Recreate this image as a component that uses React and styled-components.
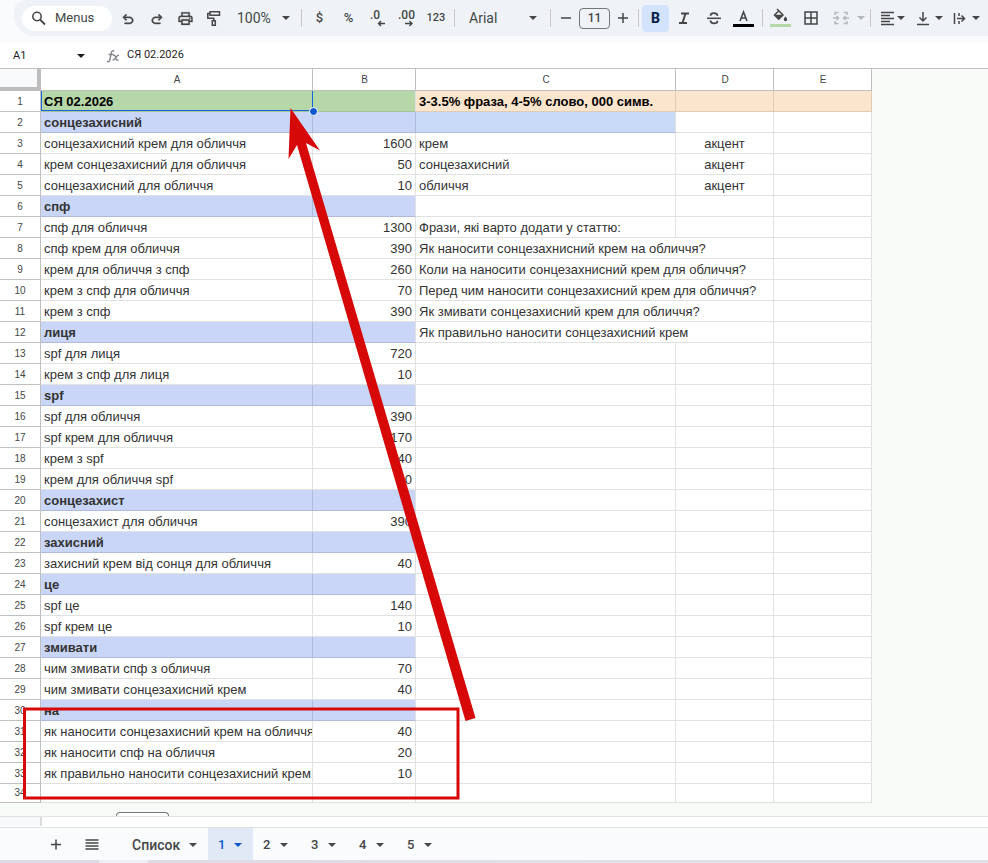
import React from "react";
import styled, { createGlobalStyle, css } from "styled-components";

const GlobalStyle = createGlobalStyle`
  *, *::before, *::after { box-sizing: border-box; }
  body {
    margin: 0;
    background: #f9fbfd;
    color: #1f1f1f;
    font-family: "Liberation Sans", Arial, sans-serif;
  }
  button, input, select { font: inherit; color: inherit; margin: 0; }
`;

const UI_FONT = `Roboto, "Liberation Sans", sans-serif`;
const LINE = "#e1e1e1";
const HEAD_LINE = "#c0c0c0";

const Page = styled.div`
  position: relative;
  display: flex;
  flex-direction: column;
  min-height: 100vh;
  overflow: hidden;
`;

/* ---------- toolbar ---------- */

const ToolbarArea = styled.header`
  padding: 0 0 7px 14px;
  background: #f9fbfd;
`;

const Toolbar = styled.div`
  display: flex;
  align-items: center;
  height: 36px;
  padding-left: 8px;
  overflow: hidden;
  background: #eff3f8;
  border-radius: 12px 0 0 20px;
  color: #444746;
  font: 500 13px/20px ${UI_FONT};
`;

const SearchPill = styled.button`
  display: flex;
  flex: none;
  align-items: center;
  gap: 8px;
  width: 90px;
  height: 25px;
  margin-right: 2px;
  padding: 0 0 0 7px;
  border: 0;
  border-radius: 13px;
  background: #fff;
  font-weight: 400;
`;

const ToolButton = styled.button`
  display: flex;
  flex: none;
  align-items: center;
  justify-content: center;
  gap: ${(p) => p.$gap || 0}px;
  width: ${(p) => p.$w || 29}px;
  height: 27px;
  padding: 0;
  border: 0;
  border-radius: 4px;
  background: ${(p) => (p.$active ? "#d3e3fd" : "transparent")};
  color: ${(p) => (p.$active ? "#041e49" : p.$muted ? "#b4b8bb" : "inherit")};
  font-size: ${(p) => p.$size || 13}px;
  font-weight: ${(p) => p.$weight || 500};
`;

const Separator = styled.span`
  flex: none;
  width: 1px;
  height: 18px;
  margin: 0 3px;
  background: #c7c7c7;
`;

const SelectBox = styled.label`
  display: grid;
  flex: none;
  align-items: center;
  width: ${(p) => p.$w}px;
  > * { grid-area: 1 / 1; }
  > svg { justify-self: end; margin-right: ${(p) => p.$end}px; pointer-events: none; }
`;

const Select = styled.select`
  appearance: none;
  width: 100%;
  height: 26px;
  padding: 0 0 0 ${(p) => p.$pad}px;
  border: 0;
  background: transparent;
  font-weight: 400;
  font-size: 14px;
`;

const SizeInput = styled.input`
  flex: none;
  width: 31px;
  height: 21px;
  margin: 0 1px;
  padding: 0;
  border: 1px solid #747775;
  border-radius: 4px;
  background: transparent;
  font-size: 12px;
  text-align: center;
`;

/* ---------- formula bar ---------- */

const FormulaBar = styled.div`
  display: flex;
  align-items: center;
  height: 26px;
  border-bottom: 1px solid ${HEAD_LINE};
  background: #fff;
  font: 11px/16px ${UI_FONT};
`;

const NameInput = styled.input`
  width: 60px;
  padding: 0 0 0 13px;
  border: 0;
  background: transparent;
`;

const NameArrow = styled.button`
  display: flex;
  align-items: center;
  justify-content: center;
  width: 42px;
  height: 20px;
  padding: 0;
  border: 0;
  background: transparent;
`;

const FxIcon = styled.svg`
  flex: none;
  margin: 2px 6px 0 4px;
`;

const FormulaInput = styled.input`
  flex: 1;
  min-width: 0;
  padding: 0;
  border: 0;
  margin-bottom: 2px;
  background: transparent;
`;

/* ---------- grid ---------- */

const SheetArea = styled.main`
  padding-bottom: 13px;
  background: #f8faf7;
`;

const Table = styled.table`
  table-layout: fixed;
  width: 872px;
  border-collapse: separate;
  border-spacing: 0;
  font-size: 13px;
  line-height: 18px;
`;

const Col = styled.col`
  width: ${(p) => p.$w}px;
`;

const headCell = css`
  border-right: 1px solid ${HEAD_LINE};
  border-bottom: 1px solid ${HEAD_LINE};
  background: #fff;
  color: #444746;
  font-size: 10px;
  font-weight: 400;
  line-height: 16px;
  text-align: center;
`;

const ColumnHead = styled.th`
  ${headCell}
  height: 22px;
  padding: 0 0 0 1px;
`;

const Corner = styled.td`
  height: 22px;
  padding: 0;
  border-right: 4px solid #bdbdbd;
  border-bottom: 4px solid #bdbdbd;
  background: #f8f9fa;
`;

const RowHead = styled.th`
  ${headCell}
  height: ${(p) => (p.$short ? 19 : 21)}px;
  padding: ${(p) => (p.$short ? 0 : 2)}px 0 0 0;
`;

const fills = {
  green: ["#b6d7a8", "#a5c398"],
  blue: ["#c9d6f8", "#b0bbdc"],
  sky: ["#c9daf8", "#b0bfdc"],
  peach: ["#fce5cd", "#e0cbb5"],
};

const Cell = styled.td`
  position: relative;
  z-index: ${(p) => (p.$selected ? 1 : "auto")};
  padding: ${(p) => (p.$short ? 0 : 2)}px 3px 0 3px;
  overflow: ${(p) => (p.$selected ? "visible" : "hidden")};
  border-right: 1px solid ${(p) => (p.$fill && !p.$last ? fills[p.$fill][1] : LINE)};
  border-bottom: 1px solid ${(p) => (p.$fill ? fills[p.$fill][1] : LINE)};
  background: ${(p) => (p.$fill ? fills[p.$fill][0] : "#fff")};
  color: ${(p) => (p.$dark ? "#000" : "#333")};
  font-weight: ${(p) => (p.$bold ? 700 : 400)};
  text-align: ${(p) => p.$align || "left"};
  white-space: nowrap;
`;

const Selection = styled.span`
  position: absolute;
  inset: 0 -1px 0 0;
  border: solid #1a65d8;
  border-width: 0 1px 1px 1px;
  &::after {
    content: "";
    position: absolute;
    right: -6px;
    bottom: -6px;
    width: 9px;
    height: 9px;
    border: 1px solid #fff;
    border-radius: 50%;
    background: #0b57d0;
  }
`;

/* ---------- bottom area ---------- */

const AddRowsEdge = styled.div`
  width: 53px;
  height: 4px;
  margin: -4px 0 0 116px;
  border: 1px solid #747775;
  border-bottom: 0;
  border-radius: 4px 4px 0 0;
  background: #fff;
`;

const ScrollStrip = styled.div`
  height: 12px;
  border-top: 1px solid #dfe2df;
  border-bottom: 1px solid #dfe2e1;
  background: #fff;
`;

const StripCorner = styled.div`
  width: 42px;
  height: 9px;
  border-right: 2px solid #d9dcda;
  background: #f8f9fa;
`;

const TabBar = styled.nav`
  display: flex;
  height: 32px;
  padding-left: 38px;
  background: #f9fbfd;
  color: #444746;
  font: 500 13px/18px ${UI_FONT};
`;

const BarButton = styled.button`
  display: flex;
  align-items: center;
  justify-content: center;
  width: 36px;
  padding: 0;
  border: 0;
  background: transparent;
`;

const Tab = styled.button`
  display: flex;
  align-items: center;
  justify-content: space-between;
  width: ${(p) => p.$w}px;
  padding: 2px ${(p) => (p.$w === 48 ? 13 : 11)}px 0 10px;
  border: 0;
  background: ${(p) => (p.$active ? "#e1e9f7" : "transparent")};
  color: ${(p) => (p.$active ? "#0b57d0" : "inherit")};
  font-size: ${(p) => p.$size || 13}px;
`;

const TabSpacer = styled.span`
  width: 12px;
`;

const BottomEdge = styled.footer`
  height: 3px;
  background: linear-gradient(90deg, #ddd9e6 0 10%, #eeeff6 10% 15%, #e0d9e6 15%, #dfe3e8 70%);
`;

const Annotation = styled.svg`
  position: absolute;
  z-index: 2;
  top: 0;
  left: 0;
  pointer-events: none;
`;

/* ---------- icons ---------- */

const Caret = () => (
  <svg width="8" height="4" viewBox="0 0 8 4" aria-hidden="true">
    <path d="M0 0h8L4 4z" fill="currentColor" />
  </svg>
);

const Icon = ({ s = 18, box = 18, children, fill }) => (
  <svg
    width={s}
    height={s}
    viewBox={`0 0 ${box} ${box}`}
    fill={fill ? "currentColor" : "none"}
    stroke={fill ? "none" : "currentColor"}
    strokeWidth="1.5"
    aria-hidden="true"
  >
    {children}
  </svg>
);

const UndoPath = () => (
  <path
    stroke="currentColor"
    strokeWidth="0.6"
    d="M7 19v-2h7.1q1.575 0 2.738-1T18 13.5T16.838 11T14.1 10H7.8l2.6 2.6L9 14L4 9l5-5l1.4 1.4L7.8 8h6.3q2.425 0 4.163 1.575T20 13.5t-1.737 3.925T14.1 19z"
  />
);

const Print = () => (
  <Icon s={17} box={24} fill>
    <path
      stroke="currentColor"
      strokeWidth="0.4"
      d="M16 8V5H8v3H6V3h12v5zm2 4.500q.425 0 .713-.288T19 11.500t-.288-.712T18 10.500t-.712.288T17 11.500t.288.713t.712.287M16 19v-4H8v4zm2 2H6v-4H2v-6q0-1.275.875-2.137T5 8h14q1.275 0 2.138.863T22 11v6h-4zm2-6v-4q0-.425-.288-.712T19 10H5q-.425 0-.712.288T4 11v4h2v-2h12v2z"
    />
  </Icon>
);

const Decimal = ({ zeros, right }) => (
  <svg width="18" height="18" viewBox="0 0 18 18" aria-hidden="true">
    <text
      x={right ? 0 : 1}
      y="10"
      fontFamily='Roboto, "Liberation Sans", sans-serif'
      fontSize="12"
      fontWeight="500"
      fill="currentColor"
    >
      {zeros}
    </text>
    <path
      d={right ? "M7 14.500h7M11.500 12l2.500 2.500-2.500 2.500" : "M16 14.500H9.500M12 12l-2.500 2.500 2.500 2.500"}
      fill="none"
      stroke="currentColor"
      strokeWidth="1.400"
    />
  </svg>
);

/* ---------- data ---------- */

const group = (name, extra) => ({ a: name, group: true, ...extra });
const rows = [
  { a: "СЯ 02.2026", title: true, c: "3-3.5% фраза, 4-5% слово, 000 симв." },
  group("сонцезахисний", { cFill: "sky" }),
  { a: "сонцезахисний крем для обличчя", b: 1600, c: "крем", d: "акцент" },
  { a: "крем сонцезахисний для обличчя", b: 50, c: "сонцезахисний", d: "акцент" },
  { a: "сонцезахисний для обличчя", b: 10, c: "обличчя", d: "акцент" },
  group("спф"),
  { a: "спф для обличчя", b: 1300, c: "Фрази, які варто додати у статтю:" },
  { a: "спф крем для обличчя", b: 390, c: "Як наносити сонцезахнисний крем на обличчя?", wide: true },
  { a: "крем для обличчя з спф", b: 260, c: "Коли на наносити сонцезахнисний крем для обличчя?", wide: true },
  { a: "крем з спф для обличчя", b: 70, c: "Перед чим наносити сонцезахисний крем для обличчя?", wide: true },
  { a: "крем з спф", b: 390, c: "Як змивати сонцезахисний крем для обличчя?", wide: true },
  group("лиця", { c: "Як правильно наносити сонцезахисний крем", wide: true }),
  { a: "spf для лиця", b: 720 },
  { a: "крем з спф для лиця", b: 10 },
  group("spf"),
  { a: "spf для обличчя", b: 390 },
  { a: "spf крем для обличчя", b: 170 },
  { a: "крем з spf", b: 40 },
  { a: "крем для обличчя spf", b: 10 },
  group("сонцезахист"),
  { a: "сонцезахист для обличчя", b: 390 },
  group("захисний"),
  { a: "захисний крем від сонця для обличчя", b: 40 },
  group("це"),
  { a: "spf це", b: 140 },
  { a: "spf крем це", b: 10 },
  group("змивати"),
  { a: "чим змивати спф з обличчя", b: 70 },
  { a: "чим змивати сонцезахисний крем", b: 40 },
  group("на"),
  { a: "як наносити сонцезахисний крем на обличчя", b: 40 },
  { a: "як наносити спф на обличчя", b: 20 },
  { a: "як правильно наносити сонцезахисний крем", b: 10 },
  {},
];

const tabs = ["1", "2", "3", "4", "5"];

function TopToolbar() {
  return (
    <ToolbarArea>
      <Toolbar role="toolbar" aria-label="Main">
        <SearchPill>
          <Icon>
            <circle cx="8" cy="7.500" r="4.200" />
            <path d="M11 10.500l5 5" strokeWidth="1.800" />
          </Icon>
          Menus
        </SearchPill>
        <ToolButton $w={28} aria-label="Undo">
          <Icon s={16} box={24} fill><g transform="translate(0 2)"><UndoPath /></g></Icon>
        </ToolButton>
        <ToolButton aria-label="Redo">
          <Icon s={16} box={24} fill><g transform="translate(24 2) scale(-1 1)"><UndoPath /></g></Icon>
        </ToolButton>
        <ToolButton aria-label="Print"><Print /></ToolButton>
        <ToolButton $w={28} aria-label="Paint format">
          <Icon>
            <path d="M5 2.800h9.500v3.400H5zM5 4.500H2.800v4.700h6v2.300" />
            <path d="M7.300 11.800h3v4.500h-3z" />
          </Icon>
        </ToolButton>
        <SelectBox $w={70} $end={8}>
          <Select $pad={9} aria-label="Zoom" defaultValue="100%"><option>100%</option></Select>
          <Caret />
        </SelectBox>
        <Separator />
        <ToolButton aria-label="Format as currency">$</ToolButton>
        <ToolButton aria-label="Format as percent">%</ToolButton>
        <ToolButton aria-label="Decrease decimal places"><Decimal zeros=".0" /></ToolButton>
        <ToolButton aria-label="Increase decimal places"><Decimal zeros=".00" right /></ToolButton>
        <ToolButton $w={30} $size={11} aria-label="More formats">123</ToolButton>
        <Separator />
        <SelectBox $w={89} $end={10}>
          <Select $pad={11} aria-label="Font" defaultValue="Arial"><option>Arial</option></Select>
          <Caret />
        </SelectBox>
        <Separator />
        <ToolButton $w={24} aria-label="Decrease font size"><Icon><path d="M4 9h10" /></Icon></ToolButton>
        <SizeInput aria-label="Font size" defaultValue="11" />
        <ToolButton $w={24} aria-label="Increase font size"><Icon><path d="M4 9h10M9 4v10" /></Icon></ToolButton>
        <Separator />
        <ToolButton $w={27} $active $size={14} $weight={800} aria-label="Bold" aria-pressed="true">B</ToolButton>
        <ToolButton $w={30} aria-label="Italic">
          <Icon><path d="M6 4.500h8M4 14h8M10.500 4.500L7.500 14" strokeWidth="2" /></Icon>
        </ToolButton>
        <ToolButton aria-label="Strikethrough">
          <Icon>
            <path d="M2 9.300h14" />
            <path d="M12.700 6.800C12.200 5.200 11 4.200 9 4.200S5.500 5 5.500 6.800M5.300 11.500c.4 1.900 1.700 2.900 3.700 2.900s3.500-.9 3.500-2.700" strokeWidth="1.700" />
          </Icon>
        </ToolButton>
        <ToolButton $w={31} aria-label="Text colour">
          <svg width="22" height="20" viewBox="0 0 22 20" aria-hidden="true">
            <path d="M7 13L10.500 4l3.500 9M8.200 10h4.600" fill="none" stroke="currentColor" strokeWidth="1.600" />
            <path d="M0 16h21v3H0z" fill="#000" />
          </svg>
        </ToolButton>
        <Separator />
        <ToolButton aria-label="Fill colour">
          <svg width="22" height="20" viewBox="0 0 22 20" aria-hidden="true">
            <path d="M7 1l6 6-4.300 4.300L4.500 7 9 2.800" fill="none" stroke="currentColor" strokeWidth="1.500" />
            <path d="M4.500 6.800H13L8.700 11.300zM15.500 8.500s1.700 1.900 1.700 3a1.700 1.700 0 0 1-3.400 0c0-1.100 1.700-3 1.700-3z" fill="currentColor" />
            <path d="M0 16h21v3H0z" fill="#b6d7a8" />
          </svg>
        </ToolButton>
        <ToolButton $w={31} aria-label="Borders">
          <Icon><path d="M3 3h12v12H3zM9 3v12M3 9h12" /></Icon>
        </ToolButton>
        <ToolButton $w={29} $muted aria-label="Merge cells">
          <Icon>
            <path d="M6.500 3.500H3V6M11.500 3.500H15V6M6.500 14.500H3V12M11.500 14.500H15V12M1 9h5M17 9h-5M4.500 7l2 2-2 2M13.500 7l-2 2 2 2" />
          </Icon>
        </ToolButton>
        <ToolButton $w={12} $muted aria-label="Merge options"><Caret /></ToolButton>
        <Separator />
        <ToolButton $w={36} aria-label="Horizontal align">
          <Icon><path d="M2 3.500h13M2 6.500h9M2 9.500h13M2 12.500h9M2 15.500h13" /></Icon>
          <Caret />
        </ToolButton>
        <ToolButton $w={37} $gap={3} aria-label="Vertical align">
          <Icon><path d="M3 15.500h12M9 3v9M5.500 8.500L9 12l3.500-3.500" /></Icon>
          <Caret />
        </ToolButton>
        <ToolButton $w={37} $gap={3} aria-label="Text wrapping">
          <Icon><path d="M3.500 4v11M8 4v3M8 12v3M6 9.500h7.500M10.500 6.500l3 3-3 3" /></Icon>
          <Caret />
        </ToolButton>
      </Toolbar>
    </ToolbarArea>
  );
}

function Row({ row, index }) {
  const { a, b, c, d, title, wide } = row;
  const short = index === rows.length - 1;
  const fill = title ? "green" : row.group ? "blue" : undefined;
  const cFill = title ? "peach" : row.cFill;
  return (
    <tr>
      <RowHead scope="row" $short={short}>{index + 1}</RowHead>
      <Cell $short={short} $fill={fill} $bold={!!fill} $dark={title} $selected={title}>
        {a}
        {title && <Selection />}
      </Cell>
      <Cell $short={short} $fill={fill} $last={!row.cFill} $align="right">{b}</Cell>
      <Cell $short={short} $fill={cFill} $last={!title} $bold={title} $dark={title} colSpan={wide ? 2 : 1}>{c}</Cell>
      {!wide && <Cell $short={short} $fill={title && "peach"} $align="center">{d}</Cell>}
      <Cell $short={short} $fill={title && "peach"} />
    </tr>
  );
}

export default function App() {
  return (
    <Page>
      <GlobalStyle />
      <TopToolbar />
      <FormulaBar>
        <NameInput aria-label="Name box" defaultValue="A1" />
        <NameArrow aria-label="Named ranges"><Caret /></NameArrow>
        <FxIcon width="15" height="15" viewBox="0 0 15 15" fill="none" stroke="#80868b" strokeWidth="1.400" aria-hidden="true">
          <path d="M1 12.500c1.700.8 2.500 0 2.900-2L5.200 4c.4-2 1.300-2.700 3-2M2.500 5.500h5M7 6.500c1.500-.8 2.200 0 2.600 1.800.5 2.400 1.200 3.400 3 2.500M13 6c-1.800 0-2.300 1.500-3.500 3.200C8.700 10.500 8 11.200 6.700 11" />
        </FxIcon>
        <FormulaInput aria-label="Formula" defaultValue="СЯ 02.2026" />
      </FormulaBar>
      <SheetArea>
        <Table>
          <colgroup>
            {[41, 272, 103, 260, 98, 98].map((w, i) => <Col key={i} $w={w} />)}
          </colgroup>
          <thead>
            <tr>
              <Corner />
              {["A", "B", "C", "D", "E"].map((l) => <ColumnHead key={l} scope="col">{l}</ColumnHead>)}
            </tr>
          </thead>
          <tbody>
            {rows.map((row, i) => <Row key={i} row={row} index={i} />)}
          </tbody>
        </Table>
      </SheetArea>
      <AddRowsEdge />
      <ScrollStrip><StripCorner /></ScrollStrip>
      <TabBar aria-label="Sheets">
        <BarButton aria-label="Add sheet"><Icon><path d="M4 9.500h10M9 4.500v10" /></Icon></BarButton>
        <BarButton aria-label="All sheets"><Icon><path d="M2.500 5h13M2.500 8h13M2.500 11h13M2.500 14h13" strokeWidth="1.300" /></Icon></BarButton>
        <TabSpacer />
        <Tab $w={86} $size={14}>Список <Caret /></Tab>
        {tabs.map((t) => (
          <Tab key={t} $w={t === "1" ? 45 : 48} $active={t === "1"}>{t} <Caret /></Tab>
        ))}
      </TabBar>
      <BottomEdge />
      <Annotation width="480" height="803" viewBox="0 0 480 803" aria-hidden="true">
        <path d="M290.500 108L320 150.500 306 143 475.500 718 465.500 721 297 145 288.500 159z" fill="#d60808" />
        <path d="M24.500 709H458v89H24.500z" fill="none" stroke="#d60808" strokeWidth="3" />
      </Annotation>
    </Page>
  );
}
